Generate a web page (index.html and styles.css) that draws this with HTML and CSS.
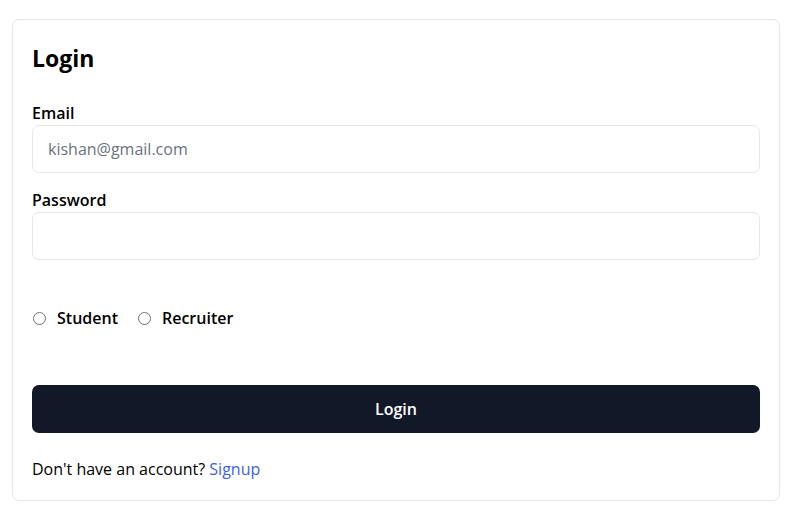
FILE: index.html
```html
<!DOCTYPE html>
<html lang="en">
<head>
<meta charset="utf-8">
<title>Login</title>
<link rel="stylesheet" href="styles.css">
</head>
<body>
<div class="page">
  <form class="card">
    <h1 class="title">Login</h1>
    <div class="field">
      <label class="label" for="email">Email</label>
      <input class="input" id="email" type="email" placeholder="kishan@gmail.com">
    </div>
    <div class="field">
      <label class="label" for="password">Password</label>
      <input class="input" id="password" type="password">
    </div>
    <div class="roles">
      <label class="role"><input type="radio" name="role" class="radio"><span>Student</span></label>
      <label class="role"><input type="radio" name="role" class="radio"><span>Recruiter</span></label>
    </div>
    <button type="button" class="btn">Login</button>
    <p class="footer">Don't have an account? <a href="#" class="link">Signup</a></p>
  </form>
</div>
</body>
</html>
```
FILE: styles.css
```css
* { box-sizing: border-box; }
html, body { margin: 0; padding: 0; background: #fff; }
body {
  font-family: "Open Sans", "Liberation Sans", Arial, sans-serif;
  color: #0a0a0a;
  font-size: 16px;
}
.page { padding: 19px 12px 0 12px; }
.card {
  border: 1px solid #e5e7eb;
  border-radius: 7px;
  padding: 22px 19px 20px 19px;
  height: 482px;
}
.title {
  margin: 0 0 27px;
  font-size: 23px;
  font-weight: 700;
  line-height: 32px;
  color: #000;
}
.field { margin: 0 0 15px; }
.label {
  display: block;
  font-weight: 600;
  line-height: 24px;
  color: #000;
}
.input {
  display: block;
  width: 100%;
  height: 48px;
  border: 1px solid #e2e8f0;
  border-radius: 7px;
  padding: 0 15px;
  font: inherit;
  font-size: 16px;
  color: #111;
  outline: none;
}
.input::placeholder { color: #6b7280; }
.roles {
  display: flex;
  align-items: center;
  gap: 19px;
  margin-top: 46px;
  height: 24px;
}
.role {
  display: flex;
  align-items: center;
  gap: 11px;
  font-weight: 600;
  color: #000;
}
.radio { margin: 0 0 0 1px; width: 13px; height: 13px; }
.btn {
  display: block;
  width: 100%;
  height: 48px;
  margin-top: 55px;
  border: none;
  border-radius: 7px;
  background: #111827;
  color: #fff;
  font: inherit;
  font-weight: 600;
}
.footer { margin: 24px 0 0; line-height: 24px; color: #000; }
.link { color: #3b63e8; text-decoration: none; }
```
